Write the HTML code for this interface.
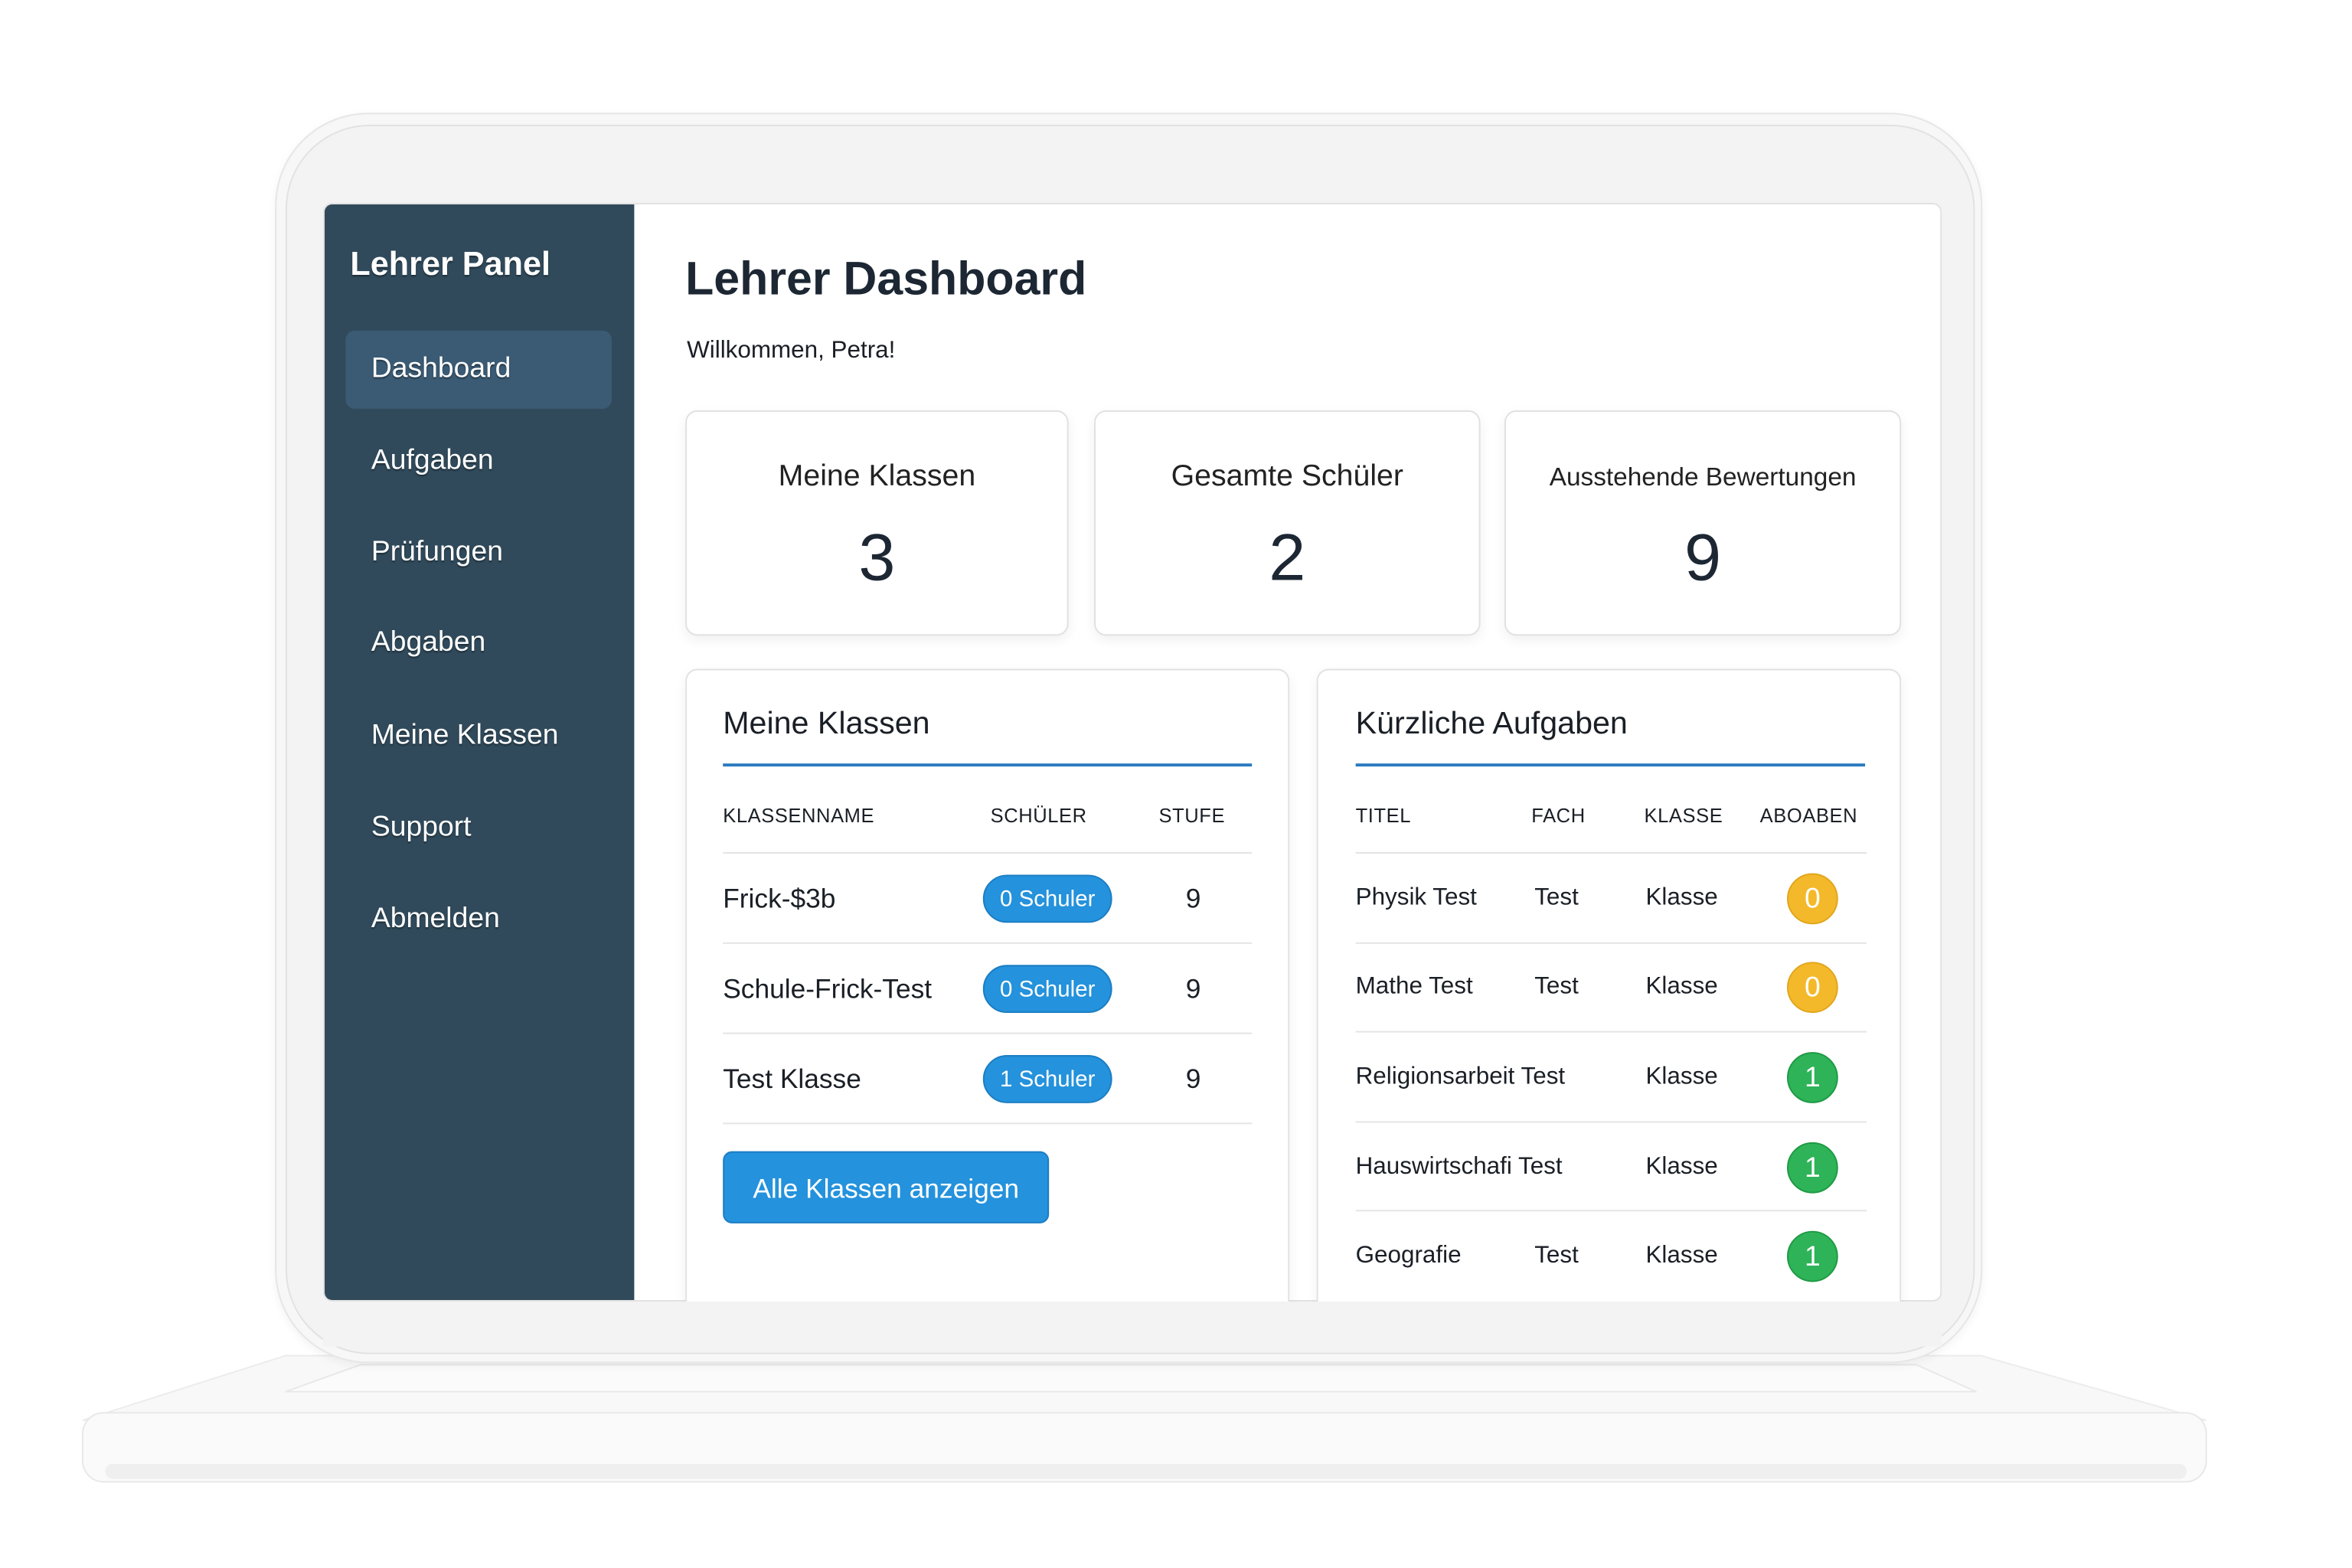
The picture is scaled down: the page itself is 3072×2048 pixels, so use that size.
<!DOCTYPE html>
<html><head><meta charset="utf-8"><style>
*{box-sizing:border-box;margin:0;padding:0}
html,body{width:3072px;height:2048px;overflow:hidden;background:#fff}
#w{position:absolute;left:0;top:0;width:1545px;height:1030px;transform:scale(1.963);transform-origin:0 0;font-family:"Liberation Sans",sans-serif;color:#1a1f26}
.a{position:absolute}
.lid{left:183px;top:75px;width:1136px;height:832px;border-radius:62px;background:#f7f7f7;border:1px solid #e6e6e6;box-shadow:0 2px 6px rgba(0,0,0,.05)}
.bez{left:190px;top:83px;width:1124px;height:818px;border-radius:56px;background:#f3f3f3;border:1px solid #e2e2e2}
.scr{left:215px;top:135px;width:1077px;height:731px;background:#fff;border:1px solid #e2e2e2;overflow:hidden;border-radius:6px}
.side{left:0;top:0;width:206px;height:731px;background:#304a5b}
.side div{position:absolute;left:31px;color:#fff;font-size:19px;text-shadow:0 1px 1px rgba(0,0,0,.4)}
.t{white-space:nowrap;line-height:1}
.card{border:1px solid #e1e1e1;border-radius:8px;background:#fff;box-shadow:0 3px 8px rgba(0,0,0,.06)}
.hd{font-size:13px;letter-spacing:.3px;color:#1a1f26}
.row{font-size:18px}
.ln{height:1px;background:#e4e4e4}
.pill{width:86px;height:32px;border-radius:16px;background:#2492dc;color:#fff;font-size:15px;text-align:center;line-height:32px;border:1px solid #1c7dc2}
.dot{width:34px;height:34px;border-radius:50%;color:#fff;font-size:19px;text-align:center;line-height:34px}
.y{background:#f4b92a;border:1px solid #e0a61c}.g{background:#2eb358;border:1px solid #1f9a45}
.r{font-size:16px}
</style></head><body><div id="w">
<svg class="a" style="left:0;top:890px" width="1545" height="110">
<polygon points="190,12 1318,12 1468,55 55,55" fill="#f8f8f8" stroke="#ececec"/>
<polygon points="240,18 1275,18 1315,36 190,36" fill="#fbfbfb" stroke="#e8e8e8"/>
<rect x="55" y="50" width="1413" height="46" rx="14" fill="#fafafa" stroke="#e8e8e8"/>
<rect x="70" y="84" width="1385" height="10" rx="5" fill="#efefef"/>
</svg>
<div class="a lid"></div><div class="a bez"></div>
<div class="a scr">
 <div class="a side">
  <div class="t" style="top:29px;left:17px;font-size:22px;font-weight:bold">Lehrer Panel</div>
  <div style="left:14px;top:84px;width:177px;height:52px;background:#3b5b74;border-radius:6px;text-shadow:none"></div>
  <div class="t" style="top:100px">Dashboard</div>
  <div class="t" style="top:161px">Aufgaben</div>
  <div class="t" style="top:222px">Prüfungen</div>
  <div class="t" style="top:282px">Abgaben</div>
  <div class="t" style="top:344px">Meine Klassen</div>
  <div class="t" style="top:405px">Support</div>
  <div class="t" style="top:466px">Abmelden</div>
 </div>
 <div class="a t" style="left:240px;top:34px;font-size:31px;font-weight:bold;color:#1c2733">Lehrer Dashboard</div>
 <div class="a t" style="left:241px;top:90px;font-size:16px">Willkommen, Petra!</div>
</div>
<div class="a card" style="left:456px;top:273px;width:255px;height:150px"><div class="a t" style="width:100%;text-align:center;top:33px;font-size:20px;color:#222">Meine Klassen</div><div class="a t" style="width:100%;text-align:center;top:76px;font-size:44px;color:#1c2733">3</div></div>
<div class="a card" style="left:728px;top:273px;width:257px;height:150px"><div class="a t" style="width:100%;text-align:center;top:33px;font-size:20px;color:#222">Gesamte Schüler</div><div class="a t" style="width:100%;text-align:center;top:76px;font-size:44px;color:#1c2733">2</div></div>
<div class="a card" style="left:1001px;top:273px;width:264px;height:150px"><div class="a t" style="width:100%;text-align:center;top:35px;font-size:17px;color:#222">Ausstehende Bewertungen</div><div class="a t" style="width:100%;text-align:center;top:76px;font-size:44px;color:#1c2733">9</div></div>
<div class="a card" style="left:456px;top:445px;width:402px;height:421px;border-bottom:none;border-radius:8px 8px 0 0"></div>
<div class="a t" style="left:481px;top:471px;font-size:21px">Meine Klassen</div>
<div class="a" style="left:481px;top:508px;width:352px;height:2px;background:#2a7bc0"></div>
<div class="a t hd" style="left:481px;top:536px">KLASSENNAME</div>
<div class="a t hd" style="left:659px;top:536px">SCHÜLER</div>
<div class="a t hd" style="left:771px;top:536px">STUFE</div>
<div class="a ln" style="left:481px;top:567px;width:352px"></div>
<div class="a ln" style="left:481px;top:627px;width:352px"></div>
<div class="a ln" style="left:481px;top:687px;width:352px"></div>
<div class="a ln" style="left:481px;top:747px;width:352px"></div>
<div class="a t row" style="left:481px;top:589px">Frick-$3b</div>
<div class="a t row" style="left:481px;top:649px">Schule-Frick-Test</div>
<div class="a t row" style="left:481px;top:709px">Test Klasse</div>
<div class="a pill t" style="left:654px;top:582px">0 Schuler</div>
<div class="a pill t" style="left:654px;top:642px">0 Schuler</div>
<div class="a pill t" style="left:654px;top:702px">1 Schuler</div>
<div class="a t row" style="left:789px;top:589px">9</div>
<div class="a t row" style="left:789px;top:649px">9</div>
<div class="a t row" style="left:789px;top:709px">9</div>
<div class="a t" style="left:481px;top:766px;width:217px;height:48px;border-radius:6px;background:#2492dc;border:1px solid #1c7dc2;color:#fff;font-size:18px;text-align:center;line-height:48px">Alle Klassen anzeigen</div>
<div class="a card" style="left:876px;top:445px;width:389px;height:421px;border-bottom:none;border-radius:8px 8px 0 0"></div>
<div class="a t" style="left:902px;top:471px;font-size:21px">Kürzliche Aufgaben</div>
<div class="a" style="left:902px;top:508px;width:339px;height:2px;background:#2a7bc0"></div>
<div class="a t hd" style="left:902px;top:536px">TITEL</div>
<div class="a t hd" style="left:1019px;top:536px">FACH</div>
<div class="a t hd" style="left:1094px;top:536px">KLASSE</div>
<div class="a t hd" style="left:1171px;top:536px">ABOABEN</div>
<div class="a ln" style="left:902px;top:567px;width:340px"></div>
<div class="a ln" style="left:902px;top:627px;width:340px"></div>
<div class="a ln" style="left:902px;top:686px;width:340px"></div>
<div class="a ln" style="left:902px;top:746px;width:340px"></div>
<div class="a ln" style="left:902px;top:805px;width:340px"></div>
<div class="a t r" style="left:902px;top:590px">Physik Test</div>
<div class="a t r" style="left:902px;top:649px">Mathe Test</div>
<div class="a t r" style="left:902px;top:709px">Religionsarbeit Test</div>
<div class="a t r" style="left:902px;top:769px">Hauswirtschafi Test</div>
<div class="a t r" style="left:902px;top:828px">Geografie</div>
<div class="a t r" style="left:1021px;top:590px">Test</div>
<div class="a t r" style="left:1021px;top:649px">Test</div>
<div class="a t r" style="left:1021px;top:828px">Test</div>
<div class="a t r" style="left:1095px;top:590px">Klasse</div>
<div class="a t r" style="left:1095px;top:649px">Klasse</div>
<div class="a t r" style="left:1095px;top:709px">Klasse</div>
<div class="a t r" style="left:1095px;top:769px">Klasse</div>
<div class="a t r" style="left:1095px;top:828px">Klasse</div>
<div class="a dot y t" style="left:1189px;top:581px">0</div>
<div class="a dot y t" style="left:1189px;top:640px">0</div>
<div class="a dot g t" style="left:1189px;top:700px">1</div>
<div class="a dot g t" style="left:1189px;top:760px">1</div>
<div class="a dot g t" style="left:1189px;top:819px">1</div>
<div class="a" style="left:215px;top:866px;width:1077px;height:30px;background:#f3f3f3"></div>
</div></body></html>
